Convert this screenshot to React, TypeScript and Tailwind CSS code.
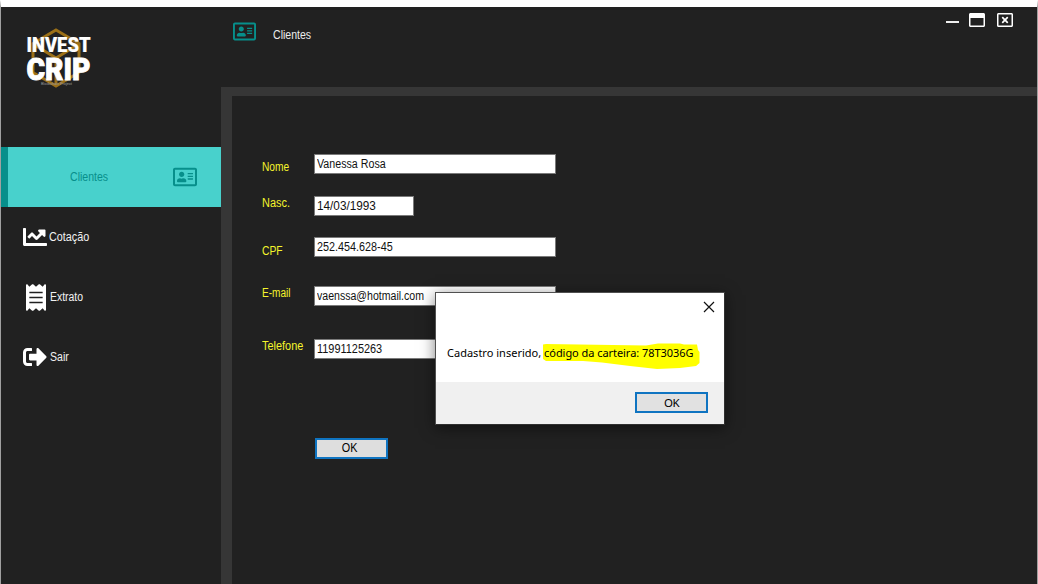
import { FaChartLine, FaReceipt, FaRegAddressCard, FaRegWindowClose, FaRegWindowMaximize, FaSignOutAlt } from "react-icons/fa";

function Logo() {
  return (
    <svg className="ml-[24px] mt-[19px] h-[66px] w-[70px]" viewBox="25 26 70 66">
      <g fill="none" stroke="#9b7018" strokeWidth="3">
        <path d="M56 30L79 43.5V72.5L56 86L33 72.5V43.5Z" />
        <path d="M33 44L56 58L79 44M56 58V86" />
      </g>
      <g fill="#fff" stroke="#fff" fontFamily="Roboto, sans-serif" fontWeight="900">
        <text x="26.5" y="52" fontSize="20" strokeWidth="0.2" textLength="64" lengthAdjust="spacingAndGlyphs">INVEST</text>
        <text x="26.5" y="80" fontSize="30.5" strokeWidth="0.9" textLength="64" lengthAdjust="spacingAndGlyphs">CRIP</text>
      </g>
      <text x="41" y="85" fill="#999" fontSize="3.8" fontFamily="Roboto, sans-serif" textLength="31">Blockchain Project</text>
    </svg>
  );
}

function Sidebar() {
  return (
    <aside className="flex w-[220px] shrink-0 flex-col text-xs text-[#f2f2f2]">
      <div className="h-[140px]"><Logo /></div>
      <div className="flex h-[60px] items-center border-l-[7px] border-[#078f8b] bg-[#48d1cc] text-[#078f8b]">
        <span className="ml-[62px] w-[103px] origin-left scale-x-[0.88]">Clientes</span>
        <FaRegAddressCard className="h-6 w-6" />
      </div>
      <div className="flex h-[60px] items-center pl-[22px]">
        <FaChartLine className="h-6 w-6 text-white" />
        <span className="ml-[2px] origin-left scale-x-[0.9]">Cotação</span>
      </div>
      <div className="flex h-[60px] items-center pl-[25px]">
        <FaReceipt className="h-[27px] w-5 text-white" />
        <span className="ml-[4px] origin-left scale-x-[0.87]">Extrato</span>
      </div>
      <div className="flex h-[60px] items-center pl-[22px]">
        <FaSignOutAlt className="h-6 w-6 text-white" />
        <span className="ml-[3px] origin-left scale-x-[0.88]">Sair</span>
      </div>
    </aside>
  );
}

function Header() {
  return (
    <header className="flex h-[80px] items-start text-white">
      <FaRegAddressCard className="ml-[12px] mt-[13px] h-[23px] w-[23px] text-[#078f8b]" />
      <span className="ml-[17px] mt-[20px] origin-left scale-x-[0.88] text-xs leading-4 text-[#ececec]">Clientes</span>
      <div className="ml-auto mr-[24px] flex items-start">
        <div className="mr-[10px] mt-[14px] h-[2px] w-[13px] bg-[#eee]" />
        <FaRegWindowMaximize className="mr-[12px] mt-[5px] h-4 w-4" />
        <FaRegWindowClose className="mt-[5px] h-4 w-4" />
      </div>
    </header>
  );
}

function Field({ label, value, row, offset, size = "w-[242px]", scale, labelScale }: {
  label: string; value: string; row: string; offset: string; size?: string; scale: string; labelScale: string;
}) {
  return (
    <div className={`flex items-start ${row}`}>
      <label className={`w-[52px] whitespace-nowrap text-xs leading-4 text-[#f5f52c] ${offset}`}>
        <span className={`inline-block origin-left ${labelScale}`}>{label}</span>
      </label>
      <div className={`h-5 border border-[#7a7a7a] bg-white pl-[2px] text-xs leading-[18px] text-[#111] ${size}`}>
        <span className={`inline-block origin-left ${scale}`}>{value}</span>
      </div>
    </div>
  );
}

function Dialog() {
  return (
    <div className="absolute left-[434px] top-[285px] flex h-[133px] w-[290px] flex-col border border-[#505050] border-b-[#303030] border-r-[#303030] bg-white text-xs text-black shadow-[0_3px_14px_rgba(0,0,0,0.5)]">
      <div className="flex h-[89px] flex-col">
        <svg className="ml-auto mr-[9px] mt-[8px] h-3 w-3" viewBox="0 0 12 12" fill="none" stroke="#111" strokeWidth="1.2">
          <path d="M1 1L11 11M11 1L1 11" />
        </svg>
        <div className="relative ml-[11px] mt-[32px] h-4 whitespace-nowrap font-['Noto_Sans',sans-serif] text-[11px] leading-4">
          <svg className="absolute left-[96px] top-[-2px] h-[27px] w-[157px]" viewBox="543 343 157 27">
            <path fill="#ff0" d="M543 344.5L546 344L646 345.5L658 343.5H680L684 344.5H697L698 350L699.5 352V363L696 366L680 368L657 369L630 366L602 362.5L583 361H546L543 359Z" />
          </svg>
          <span className="relative tracking-[0.01px]">Cadastro inserido, </span>
          <span className="relative tracking-[-0.05px]">código da carteira: 78T3036G</span>
        </div>
      </div>
      <div className="flex flex-1 items-start justify-end bg-[#f0f0f0] pr-[16px] pt-[10px]">
        <button className="h-[21px] w-[73px] border-2 border-[#0f74c1] bg-[#e1e1e1] font-['Noto_Sans',sans-serif] text-[11.5px] leading-[17px] tracking-[-0.5px]">OK</button>
      </div>
    </div>
  );
}

export default function App() {
  return (
    <main className="relative flex h-[584px] w-[1038px] overflow-hidden border-x border-t-[7px] border-x-[#a0a0a0] border-t-white bg-[#212121] font-['Liberation_Sans',Arial,sans-serif]">
      <Sidebar />
      <section className="flex min-w-0 flex-1 flex-col">
        <Header />
        <div className="flex-1 border-l-[11px] border-t-[9px] border-[#363636] pl-[30px] pt-[58px]">
          <Field label="Nome" value="Vanessa Rosa" row="h-[42px]" offset="pt-[5px]" scale="scale-x-[0.89]" labelScale="scale-x-[0.85]" />
          <Field label="Nasc." value="14/03/1993" row="h-[41px]" offset="-mt-px" size="w-[100px]" scale="scale-x-[0.98]" labelScale="scale-x-[0.91]" />
          <Field label="CPF" value="252.454.628-45" row="h-[49px]" offset="pt-[6px]" scale="scale-x-[0.9]" labelScale="scale-x-[0.86]" />
          <Field label="E-mail" value="vaenssa@hotmail.com" row="h-[53px]" offset="-mt-px" scale="scale-x-[0.88]" labelScale="scale-x-[0.84]" />
          <Field label="Telefone" value="11991125263" row="h-[99px]" offset="-mt-px" scale="scale-x-[0.91]" labelScale="scale-x-[0.91]" />
          <button className="ml-[53px] block h-[21px] w-[73px] border-2 border-[#0f74c1] bg-[#dedede] pr-[3px] text-xs leading-[17px] text-black">
            <span className="inline-block scale-x-[0.9]">OK</span>
          </button>
        </div>
      </section>
      <Dialog />
    </main>
  );
}
